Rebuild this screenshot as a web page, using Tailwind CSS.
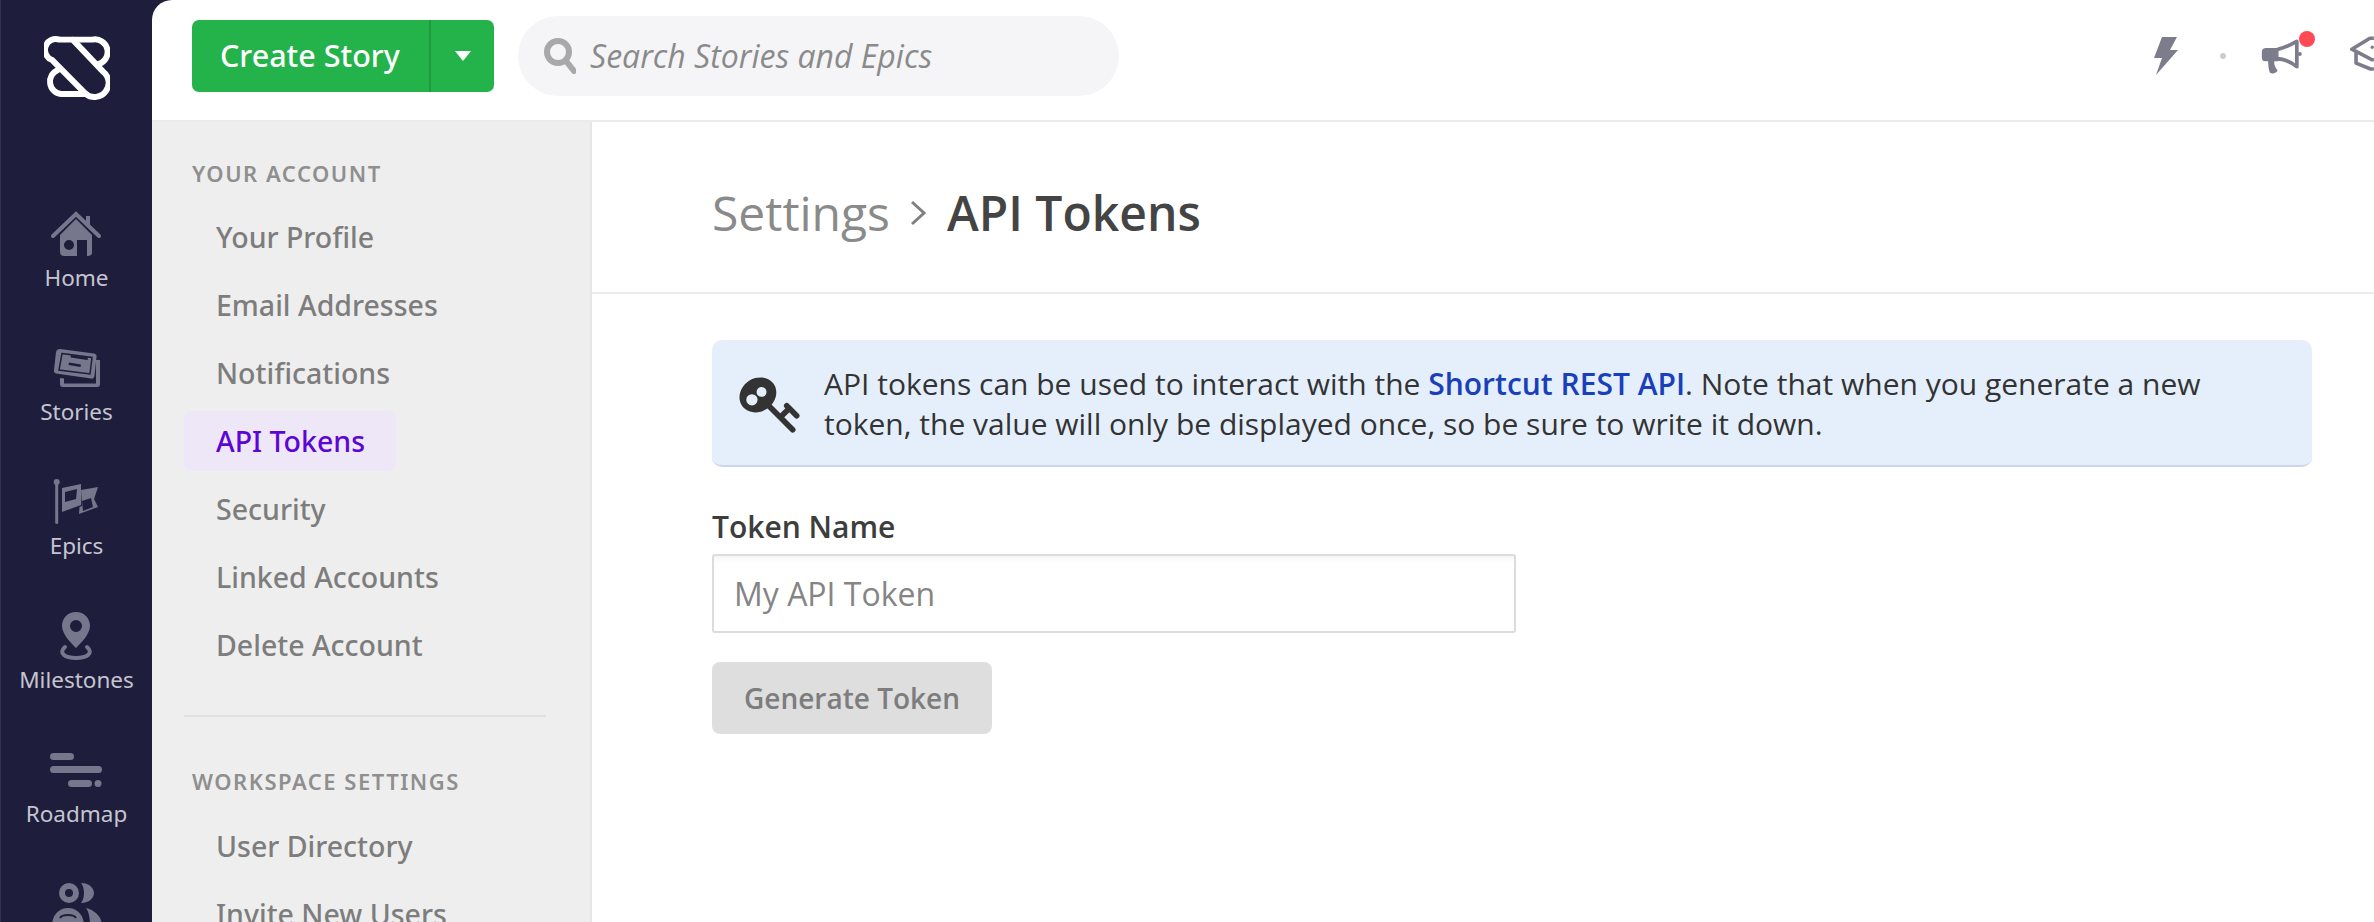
<!DOCTYPE html>
<html lang="en">
  <head>
    <meta charset="UTF-8" />
    <script src="https://cdn.jsdelivr.net/npm/@tailwindcss/browser@4"></script>
    <title>API Tokens</title>
  </head>
  <body>
    <div class="flex h-screen overflow-hidden bg-[#1e1e3c] font-['Noto_Sans',sans-serif]">

      <!-- Icon rail -->
      <nav class="flex flex-col items-center w-[152px] shrink-0 border-l border-[#33334f] text-[22.500px] text-[#c5c5d0]">
        <svg class="mt-[34px] w-[66px] h-[66px] shrink-0" viewBox="33 26 200 200" fill="none" stroke="#fff" stroke-width="18" stroke-linejoin="round" stroke-linecap="round">
          <path d="M80 43L120 43 212 140A32 32 0 0 1 160 208L58 105A32 32 0 0 1 80 43Z"/>
          <path d="M120 43H180A38 38 0 0 1 195 118"/>
          <path d="M160 208H85A38 38 0 0 1 75 135"/>
        </svg>
        <div class="flex flex-col items-center shrink-0 mt-[104px] h-[134px]">
          <svg class="w-[50px] h-[52px] overflow-visible" viewBox="0 0 50 52">
            <path d="M2 32L25 10 48 32" fill="none" stroke="#76768c" stroke-width="4" stroke-linecap="round"/>
            <path d="M35 12H39V22H35Z" fill="#76768c"/>
            <path fill="#76768c" fill-rule="evenodd" d="M25 15L41 31V49C41 51 39 52 37 52H36V36H26V52H13C10 52 9 50 9 47V31ZM18 36A5 5 0 1 0 18 46 5 5 0 1 0 18 36Z"/>
          </svg>
          <span class="mt-[5px]">Home</span>
        </div>
        <div class="flex flex-col items-center shrink-0 h-[134px]">
          <svg class="w-[50px] h-[52px] overflow-visible" viewBox="0 0 50 52">
            <path fill="#76768c" d="M8 11L42 15.500C44 16 45 17 44.500 19L42.500 38C42 40 41 41 39 40.500L4 35.500C2.500 35 1.500 34 2 32L4 14C4.500 12 6 11 8 11Z"/>
            <path fill="none" stroke="#1e1e3c" stroke-width="1.500" d="M10 15.500L40 19.500 38 36 7 32Z"/>
            <path fill="#1e1e3c" d="M19 17L36 19.500 35.500 22 18.500 19.500ZM17 24.500L29 26.500 28.500 29 16.500 27Z"/>
            <path fill="#76768c" d="M44 22H48V46C48 48 47 49 45 49H11C9 49 8 48 8 46V40L12 40.500V45.500H44Z"/>
          </svg>
          <span class="mt-[5px]">Stories</span>
        </div>
        <div class="flex flex-col items-center shrink-0 h-[134px]">
          <svg class="w-[50px] h-[52px] overflow-visible" viewBox="0 0 50 52" fill="#76768c">
            <circle cx="5.700" cy="10" r="3"/>
            <rect x="4.200" y="10" width="3" height="42" rx="1.500"/>
            <path fill-rule="evenodd" d="M11 16L30 12V33L11 40ZM14 20V30L25 27 26 17Z"/>
            <path fill-rule="evenodd" d="M30 18L47 15 43 27 47 35 28 42 28.500 35 31 34ZM31 29L32 39 42 35 40 26Z"/>
          </svg>
          <span class="mt-[5px]">Epics</span>
        </div>
        <div class="flex flex-col items-center shrink-0 h-[134px]">
          <svg class="w-[50px] h-[52px] overflow-visible" viewBox="0 0 50 52">
            <path fill="#76768c" fill-rule="evenodd" d="M24 6C32 6 38 12 38 20 38 28 29 37 24 42 19 37 10 28 10 20 10 12 16 6 24 6ZM24 14A6 6 0 1 0 24 26 6 6 0 1 0 24 14Z"/>
            <path fill="none" stroke="#76768c" stroke-width="4" stroke-linecap="round" d="M13 41C6 47 13 52 24 52S42 47 35 41"/>
          </svg>
          <span class="mt-[5px]">Milestones</span>
        </div>
        <div class="flex flex-col items-center shrink-0 h-[134px]">
          <svg class="w-[50px] h-[52px] overflow-visible" viewBox="0 0 50 52" fill="#76768c">
            <rect x="-1" y="13" width="24" height="7" rx="3.500"/>
            <rect x="-1" y="26" width="52" height="7" rx="3.500"/>
            <rect x="17" y="40" width="24" height="7" rx="3.500"/>
            <circle cx="47" cy="43.500" r="3.500"/>
          </svg>
          <span class="mt-[5px]">Roadmap</span>
        </div>
        <svg class="w-[50px] h-[52px] shrink-0 overflow-visible" viewBox="0 0 50 52" fill="#76768c">
          <path fill-rule="evenodd" d="M17 9A10 10 0 1 1 17 29 10 10 0 1 1 17 9ZM17 15A4 4 0 1 0 17 23 4 4 0 1 0 17 15Z"/>
          <path d="M29 9C38 9 42 15 42 19S38 29 29 29C33 24 33 14 29 9Z"/>
          <path d="M0 52C0 40 8 34 16 34S32 40 32 52Z"/>
          <path d="M34 34C42 36 50 42 50 52H38C38 44 37 38 34 34Z"/>
          <path d="M8 44C10 40 22 40 24 44" fill="none" stroke="#1e1e3c" stroke-width="2"/>
        </svg>
      </nav>

      <!-- Main panel -->
      <div class="flex flex-col flex-1 min-w-0 bg-white rounded-tl-[20px]">

        <!-- Top bar -->
        <header class="flex items-center h-[122px] shrink-0 pl-[40px] pb-[8px] border-b-2 border-[#ebebeb]">
          <div class="flex items-stretch h-[72px] w-[302px] rounded-[7px] bg-[#24b24b] text-white">
            <span class="flex items-center pl-[28px] w-[237px] text-[30.500px] font-medium">Create Story</span>
            <span class="flex items-center justify-center flex-1 border-l-2 border-[#1f9a41]">
              <svg class="w-[18px] h-[12px]" viewBox="0 0 18 12" fill="#fff"><path d="M1 1H17L9 11Z"/></svg>
            </span>
          </div>
          <div class="flex items-center ml-[24px] w-[601px] h-[80px] rounded-full bg-[#f5f5f7] pl-[26px]">
            <svg class="w-[32px] h-[36px]" viewBox="0 0 32 36" fill="none" stroke="#a8a8a8" stroke-width="6"><circle cx="14" cy="14" r="11"/><path d="M22 23L30 33" stroke-linecap="round"/></svg>
            <span class="ml-[14px] text-[32px] italic text-[#8a8a8a] font-['Open_Sans',sans-serif]">Search Stories and Epics</span>
          </div>
          <div class="flex items-center ml-auto">
            <svg class="w-[24px] h-[38px]" viewBox="0 0 24 38" fill="#7d7c8c"><path d="M8 0H23L16 13H24L2 38 8 21H0Z"/></svg>
            <span class="w-[6px] h-[6px] ml-[42px] rounded-full bg-[#cccccc]"></span>
            <div class="relative ml-[34px]">
              <svg class="block w-[42px] h-[35px]" viewBox="20 35 125 105">
                <path fill="#7d7c8c" d="M25 75C25 65 30 62 40 62H75V102H62C62 115 68 125 72 128 72 135 60 140 52 138 46 136 44 115 44 102H35C28 102 25 98 25 90Z"/>
                <path fill="none" stroke="#7d7c8c" stroke-width="11" stroke-linejoin="round" d="M72 66C95 62 112 52 130 42V118C110 102 95 96 72 94"/>
                <circle cx="139" cy="80" r="6" fill="#7d7c8c"/>
              </svg>
              <span class="absolute -top-[8px] -right-[13px] w-[16px] h-[16px] rounded-full bg-[#ff4a55]"></span>
            </div>
            <svg class="w-[25px] h-[38px] ml-[47px] -mt-[4px]" viewBox="285 25 75 115" fill="none" stroke="#7d7c8c" stroke-width="11" stroke-linejoin="round">
              <path d="M360 35H348L293 68 355 100H360"/>
              <path d="M306 78V110L350 128H360"/>
              <circle cx="355" cy="62" r="5" fill="#7d7c8c" stroke="none"/>
            </svg>
          </div>
        </header>

        <div class="flex flex-1 min-h-0">
          <!-- Settings sidebar -->
          <aside class="w-[440px] shrink-0 bg-[#eeeeee] pt-[34px] pl-[32px] overflow-hidden border-r-2 border-[#e6e6e6]">
            <h3 class="pl-[8px] h-[34px] leading-[34px] text-[22px] font-semibold tracking-[1.500px] text-[#8f8f8f]">YOUR ACCOUNT</h3>
            <ul class="mt-[13px] w-[212px] text-[28.500px] font-medium text-[#7d7d7d] whitespace-nowrap">
              <li class="flex items-center h-[68px] pl-[32px]">Your Profile</li>
              <li class="flex items-center h-[68px] pl-[32px]">Email Addresses</li>
              <li class="flex items-center h-[68px] pl-[32px]">Notifications</li>
              <li class="flex items-center h-[60px] my-[4px] pl-[32px] rounded-[8px] bg-[#ede7f7] text-[#5c05d6]">API Tokens</li>
              <li class="flex items-center h-[68px] pl-[32px]">Security</li>
              <li class="flex items-center h-[68px] pl-[32px]">Linked Accounts</li>
              <li class="flex items-center h-[68px] pl-[32px]">Delete Account</li>
            </ul>
            <div class="mt-[36px] w-[362px] h-[2px] bg-[#e0e0e0]"></div>
            <h3 class="mt-[47px] pl-[8px] h-[34px] leading-[34px] text-[22px] font-semibold tracking-[1.500px] text-[#8f8f8f]">WORKSPACE SETTINGS</h3>
            <ul class="mt-[14px] text-[28.500px] font-medium text-[#7d7d7d] whitespace-nowrap">
              <li class="flex items-center h-[68px] pl-[32px]">User Directory</li>
              <li class="flex items-center h-[68px] pl-[32px]">Invite New Users</li>
            </ul>
          </aside>

          <!-- Content -->
          <main class="flex-1 min-w-0">
            <div class="flex items-center h-[172px] pl-[120px] pt-[12px] border-b-2 border-[#ebebeb] text-[48px] font-['Open_Sans',sans-serif]">
              <span class="text-[#8a8a8a]">Settings</span>
              <svg class="w-[16px] h-[28px] ml-[20px] mr-[21px]" viewBox="0 0 16 28" fill="none" stroke="#808080" stroke-width="3"><path d="M2 3L14 14 2 25"/></svg>
              <span class="font-semibold text-[#444444]">API Tokens</span>
            </div>
            <div class="pt-[46px] pl-[120px] pr-[62px]">
              <div class="flex items-center h-[127px] pt-[2px] rounded-[10px] bg-[#e5effc] border-b-2 border-[#ccd6e8] pl-[26px] pr-[40px]">
                <svg class="w-[63px] h-[62px] shrink-0" viewBox="25 20 190 185">
                  <ellipse cx="85" cy="85" rx="58" ry="50" fill="#333333" transform="rotate(-35 85 85)"/>
                  <circle cx="67" cy="100" r="17" fill="#e5effc"/>
                  <circle cx="96" cy="76" r="15" fill="#e5effc"/>
                  <path d="M120 120L190 190M155 150L180 125M172 118L202 148" fill="none" stroke="#333333" stroke-width="17" stroke-linecap="round"/>
                </svg>
                <p class="ml-[23px] text-[30px] leading-[40px] text-[#333333] font-['Open_Sans',sans-serif]">API tokens can be used to interact with the <a class="font-semibold text-[#1a3fbb]">Shortcut REST API</a>. Note that when you generate a new token, the value will only be displayed once, so be sure to write it down.</p>
              </div>
              <label class="block mt-[40px] h-[40px] leading-[40px] text-[30px] font-semibold text-[#3d3d3d] font-['Open_Sans',sans-serif]">Token Name</label>
              <div class="flex items-center mt-[7px] w-[804px] h-[79px] pl-[20px] bg-white border-2 border-[#dcdcdc] rounded-[3px] shadow-[inset_0_6px_6px_-4px_rgba(0,0,0,0.06)] text-[32px] text-[#858585] font-['Open_Sans',sans-serif]">My API Token</div>
              <button class="block mt-[29px] w-[280px] h-[72px] rounded-[8px] bg-[#dedede] text-[28px] font-semibold text-[#7d7d7d] font-['Open_Sans',sans-serif]">Generate Token</button>
            </div>
          </main>
        </div>
      </div>
    </div>
  </body>
</html>
